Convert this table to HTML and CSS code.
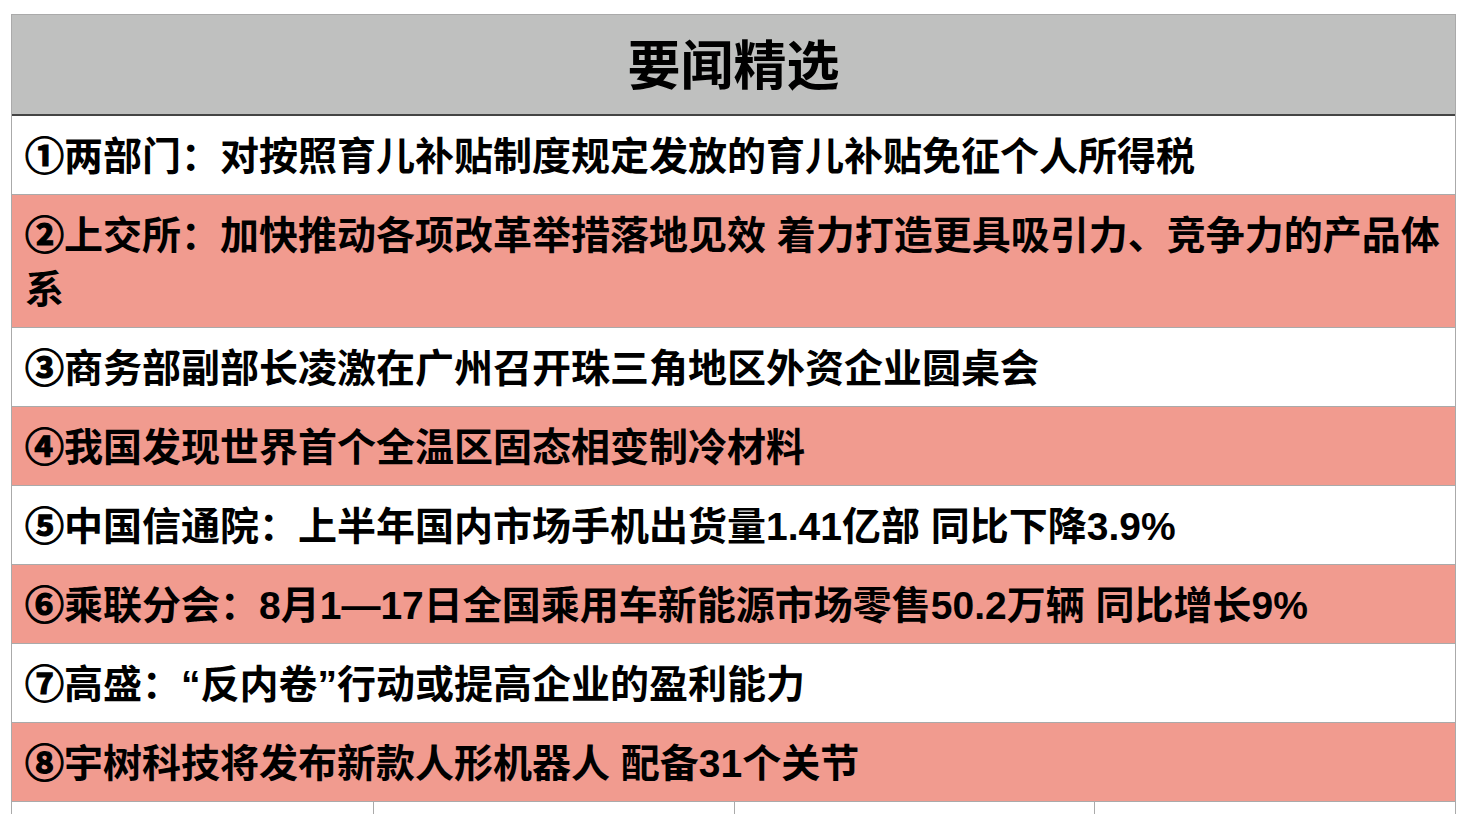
FILE: index.html
```html
<!DOCTYPE html>
<html lang="zh-CN">
<head>
<meta charset="utf-8">
<title>要闻精选</title>
<link rel="stylesheet" href="styles.css">
</head>
<body>
<div class="sheet">
  <div class="header">要闻精选</div>
  <div class="row white"><span class="num">①</span>两部门：对按照育儿补贴制度规定发放的育儿补贴免征个人所得税</div>
  <div class="row red"><span class="num">②</span>上交所：加快推动各项改革举措落地见效 着力打造更具吸引力、竞争力的产品体系</div>
  <div class="row white"><span class="num">③</span>商务部副部长凌激在广州召开珠三角地区外资企业圆桌会</div>
  <div class="row red"><span class="num">④</span>我国发现世界首个全温区固态相变制冷材料</div>
  <div class="row white"><span class="num">⑤</span>中国信通院：上半年国内市场手机出货量1.41亿部 同比下降3.9%</div>
  <div class="row red"><span class="num">⑥</span>乘联分会：8月1—17日全国乘用车新能源市场零售50.2万辆 同比增长9%</div>
  <div class="row white"><span class="num">⑦</span>高盛：“反内卷”行动或提高企业的盈利能力</div>
  <div class="row red"><span class="num">⑧</span>宇树科技将发布新款人形机器人 配备31个关节</div>
  <div class="empty">
    <div class="cell"></div>
    <div class="cell"></div>
    <div class="cell"></div>
    <div class="cell"></div>
  </div>
</div>
</body>
</html>
```

FILE: styles.css
```css
html, body {
  margin: 0;
  padding: 0;
  background: #ffffff;
  overflow: hidden;
}
body {
  height: 814px;
  font-family: "Liberation Sans", "Noto Sans CJK SC", sans-serif;
  color: #000;
}
.sheet {
  margin: 14px 0 0 11px;
  width: 1443px;
  border: 1px solid #aaaaaa;
  border-bottom: none;
}
.header {
  height: 101px;
  padding-bottom: 4px;
  box-sizing: border-box;
  background: #bfc0bf;
  border-bottom: 2px solid #444444;
  display: flex;
  align-items: center;
  justify-content: center;
  font-family: "Noto Sans CJK SC", sans-serif;
  font-size: 53px;
  font-weight: 700;
  line-height: 1;
}
.row {
  padding: 14px 8px 10px 13px;
  font-size: 39px;
  font-weight: 700;
  line-height: 54px;
  border-bottom: 1px solid #aaaaaa;
}
.num {
  -webkit-text-stroke: 1.2px #000;
}
.white { background: #ffffff; }
.red { background: #f19b8f; }
.empty {
  display: grid;
  grid-template-columns: repeat(4, 1fr);
  height: 20px;
}
.cell {
  border-left: 1px solid #aaaaaa;
}
.cell:first-child {
  border-left: none;
}
```
